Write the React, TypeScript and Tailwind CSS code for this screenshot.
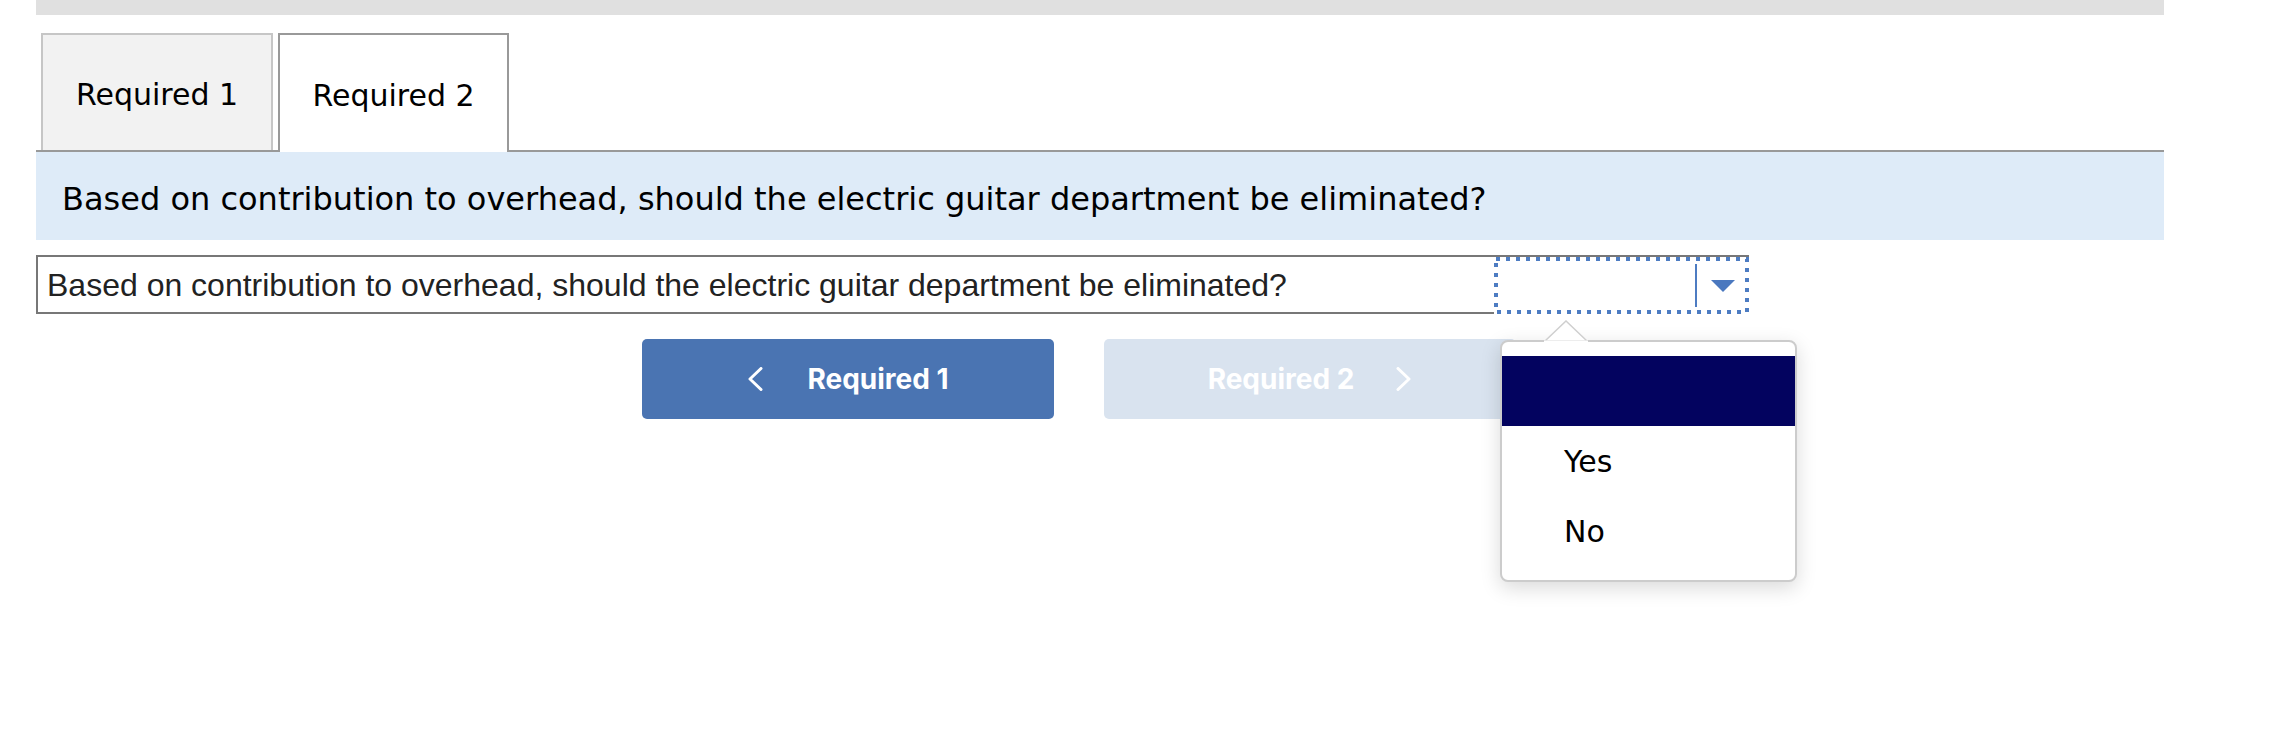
import React from "react";

const verdana = { fontFamily: '"DejaVu Sans", Verdana, sans-serif' };

function ChevronLeft() {
  return (
    <svg width="16" height="24" viewBox="0 0 16 24" className="block">
      <polyline points="14,1.5 3,12 14,22.5" fill="none" stroke="white" strokeWidth="3" strokeLinecap="round" strokeLinejoin="round" />
    </svg>
  );
}

function ChevronRight() {
  return (
    <svg width="16" height="24" viewBox="0 0 16 24" className="block">
      <polyline points="2,1.5 13,12 2,22.5" fill="none" stroke="white" strokeWidth="3" strokeLinecap="round" strokeLinejoin="round" />
    </svg>
  );
}

export default function App() {
  return (
    <div className="relative w-[2278px] h-[736px] bg-white overflow-hidden">
      <div className="ml-[36px] w-[2128px]">
        <div className="h-[15px] bg-[#e0e0e0]" />
        {/* Tabs */}
        <div className="mt-[18px] flex items-start border-b-2 border-[#999999] h-[119px]">
          <div
            className="ml-[5px] w-[232px] h-[117px] bg-[#f2f2f2] border-2 border-b-0 border-[#c6c6c6] flex items-center justify-center text-[30px] text-black"
            style={verdana}
          >
            <span className="mt-[3px]">Required 1</span>
          </div>
          <div
            className="relative z-10 ml-[5px] w-[231px] h-[119px] bg-white border-2 border-b-0 border-[#999999] flex items-center justify-center text-[30px] text-black"
            style={verdana}
          >
            <span className="mt-[4px]">Required 2</span>
          </div>
        </div>
        {/* Question band */}
        <div
          className="h-[88px] bg-[#deebf8] flex items-center pl-[26px] pt-[6px] text-[32px] text-black"
          style={verdana}
        >
          Based on contribution to overhead, should the electric guitar department be eliminated?
        </div>
        {/* Answer row */}
        <div className="mt-[15px] w-[1713px] h-[59px] flex border-t-2 border-[#777777]">
          <div
            className="flex-1 h-[57px] border-l-2 border-b-2 border-[#777777] flex items-center pl-[9px] text-[32px] text-[#222222]"
            style={{ fontFamily: '"Liberation Sans", Arial, sans-serif' }}
          >
            Based on contribution to overhead, should the electric guitar department be eliminated?
          </div>
          <div className="relative w-[255px] h-[57px] flex items-center justify-end bg-white">
            <svg width="255" height="57" viewBox="0 0 255 57" className="absolute left-0 top-0 block">
              <rect x="2" y="2" width="251" height="53" fill="none" stroke="#4d7cc2" strokeWidth="4" strokeDasharray="4 6" />
            </svg>
            <div className="w-[2px] h-[43px] bg-[#4d7cc2]" />
            <div className="w-[52px] flex items-center justify-center">
              <svg width="24" height="12" viewBox="0 0 24 12" className="block">
                <polygon points="0,0 24,0 12,12" fill="#4a78bf" />
              </svg>
            </div>
          </div>
        </div>
        {/* Buttons */}
        <div className="mt-[25px] ml-[606px] flex gap-[50px]" style={{ fontFamily: 'Inter, Roboto, sans-serif' }}>
          <div className="w-[412px] h-[80px] rounded-[5px] bg-[#4a74b2] flex items-center justify-center gap-[44px] text-white text-[28px] font-bold">
            <ChevronLeft />
            <span>Required 1</span>
          </div>
          <div className="w-[412px] h-[80px] rounded-[5px] bg-[#d9e3ef] flex items-center justify-center gap-[42px] text-white text-[28px] font-bold">
            <span>Required 2</span>
            <ChevronRight />
          </div>
        </div>
      </div>

      {/* Dropdown popover */}
      <div className="absolute left-[1500px] top-[320px] w-[297px]">
        <svg width="44" height="22" viewBox="0 0 44 22" className="absolute left-[44px] top-0 z-20 block">
          <polygon points="1,21 22,1 43,21" fill="white" stroke="#cfcfcf" strokeWidth="1.5" />
          <rect x="0" y="20.5" width="44" height="2" fill="white" />
        </svg>
        <div
          className="mt-[20px] h-[242px] rounded-[8px] border-2 border-[#cccccc] bg-white shadow-[0_6px_20px_rgba(0,0,0,0.15)] pt-[14px] overflow-hidden"
          style={verdana}
        >
          <div className="h-[70px] bg-[#03035f]" />
          <div className="h-[70px] flex items-center pl-[62px] text-[30px] text-black">Yes</div>
          <div className="h-[70px] flex items-center pl-[62px] text-[30px] text-black">No</div>
        </div>
      </div>
    </div>
  );
}
